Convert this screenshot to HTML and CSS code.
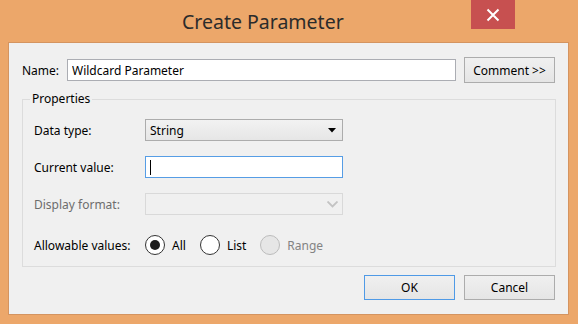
FILE: index.html
```html
<!DOCTYPE html>
<html lang="en">
<head>
    <meta charset="utf-8">
    <title>Create Parameter</title>
    <link rel="stylesheet" href="styles.css">
</head>
<body>
    <div class="window">
        <div class="titlebar">
            <h1 class="title">Create Parameter</h1>
            <button class="close" aria-label="Close">
                <svg width="14" height="14" viewBox="0 0 14 14">
                    <path d="M1.5 1.5 L12.5 12.5 M12.5 1.5 L1.5 12.5" stroke="#ffffff" stroke-width="2" fill="none"/>
                </svg>
            </button>
        </div>

        <div class="client">
            <div class="name-row">
                <label class="name-label" for="name">Name:</label>
                <input class="textbox name-box" id="name" type="text" value="Wildcard Parameter">
                <button class="btn comment">Comment &gt;&gt;</button>
            </div>

            <fieldset class="group">
                <legend>Properties</legend>

                <div class="row">
                    <span class="label">Data type:</span>
                    <div class="select">
                        <span>String</span>
                        <svg width="8" height="5" viewBox="0 0 8 5"><path d="M0 0 H8 L4 4.5 Z" fill="#000"/></svg>
                    </div>
                </div>

                <div class="row">
                    <span class="label">Current value:</span>
                    <div class="textbox current"><span class="caret"></span></div>
                </div>

                <div class="row disabled">
                    <span class="label">Display format:</span>
                    <div class="select off">
                        <span></span>
                        <svg width="11" height="7" viewBox="0 0 11 7"><path d="M0.5 0.5 L5.5 5.5 L10.5 0.5" stroke="#c3c3c3" stroke-width="1.8" fill="none"/></svg>
                    </div>
                </div>

                <div class="row radios">
                    <span class="label">Allowable values:</span>
                    <span class="radio checked"></span><span class="opt">All</span>
                    <span class="radio"></span><span class="opt">List</span>
                    <span class="radio off"></span><span class="opt off">Range</span>
                </div>
            </fieldset>

            <div class="actions">
                <button class="btn ok">OK</button>
                <button class="btn">Cancel</button>
            </div>
        </div>
    </div>
</body>
</html>
```

FILE: styles.css
```css
body {
    margin: 0;
    background-color: #eca76a;
    font-family: "Noto Sans", "Open Sans", sans-serif;
    font-size: 12px;
    color: #000000;
}
.window {
    width: 578px;
    height: 324px;
    display: flex;
    flex-direction: column;
}
.titlebar {
    height: 42px;
    display: flex;
    align-items: flex-start;
    padding-left: 182px;
}
.title {
    margin: 0;
    padding-top: 8px;
    font-size: 19.5px;
    font-weight: normal;
    line-height: 27px;
    color: #2b2b2b;
}
.close {
    width: 44px;
    height: 29px;
    margin: 0 63px 0 auto;
    border: none;
    padding: 0;
    background-color: #c75050;
    display: flex;
    align-items: center;
    justify-content: center;
}
.client {
    margin: 0 9px 9px 8px;
    height: 273px;
    box-sizing: border-box;
    background-color: #f0f0f0;
    border: 1px solid #d49460;
    padding: 14px 13px 0 13px;
}
.name-row {
    display: flex;
    align-items: center;
    height: 26px;
}
.name-label {
    width: 45px;
}
.textbox {
    box-sizing: border-box;
    height: 22px;
    background-color: #ffffff;
    border: 1px solid #abadb3;
    font-family: inherit;
    font-size: 12px;
    padding: 0 4px;
    margin: 0;
}
.name-box {
    width: 389px;
    outline: none;
}
.btn {
    box-sizing: border-box;
    width: 91px;
    height: 26px;
    margin: 0 0 0 8px;
    padding: 0;
    border: 1px solid #acacac;
    background: linear-gradient(#f0f0f0, #e5e5e5);
    font-family: inherit;
    font-size: 12px;
    color: #000000;
}
.group {
    margin: 8px 0 0 0;
    width: 534px;
    box-sizing: border-box;
    height: 176px;
    border: 1px solid #dcdcdc;
    padding: 12px 0 0 0;
}
.group legend {
    padding: 0 2px;
    margin-left: 7px;
    line-height: 16px;
}
.row {
    display: flex;
    align-items: center;
    height: 22px;
    margin: 0 0 15px 11px;
}
.label {
    width: 111px;
}
.select {
    box-sizing: border-box;
    width: 198px;
    height: 22px;
    border: 1px solid #acacac;
    background: linear-gradient(#f2f2f2, #e6e6e6);
    display: flex;
    align-items: center;
    justify-content: space-between;
    padding: 0 6px 0 4px;
}
.select.off {
    border-color: #d9d9d9;
    background: #f0f0f0;
    padding-right: 4px;
}
.current {
    width: 198px;
    border-color: #569de5;
    display: flex;
    align-items: center;
}
.caret {
    width: 1px;
    height: 15px;
    background-color: #000000;
}
.disabled .label {
    color: #6d6d6d;
}
.radios {
    height: 20px;
    margin-top: 20px;
    margin-bottom: 0;
}
.radio {
    box-sizing: border-box;
    width: 20px;
    height: 20px;
    border-radius: 50%;
    border: 1px solid #333333;
    background-color: #ffffff;
    display: flex;
    align-items: center;
    justify-content: center;
}
.radio.checked::after {
    content: "";
    width: 10px;
    height: 10px;
    border-radius: 50%;
    background-color: #1c1c1c;
}
.radio.off {
    border-color: #bcbcbc;
    background-color: #e6e6e6;
}
.opt {
    margin: 0 14px 0 7px;
}
.opt.off {
    color: #838383;
}
.actions {
    display: flex;
    justify-content: flex-end;
    margin-top: 8px;
}
.actions .btn {
    height: 25px;
    margin-left: 9px;
}
.ok {
    border-color: #4f9ae6;
}
```
